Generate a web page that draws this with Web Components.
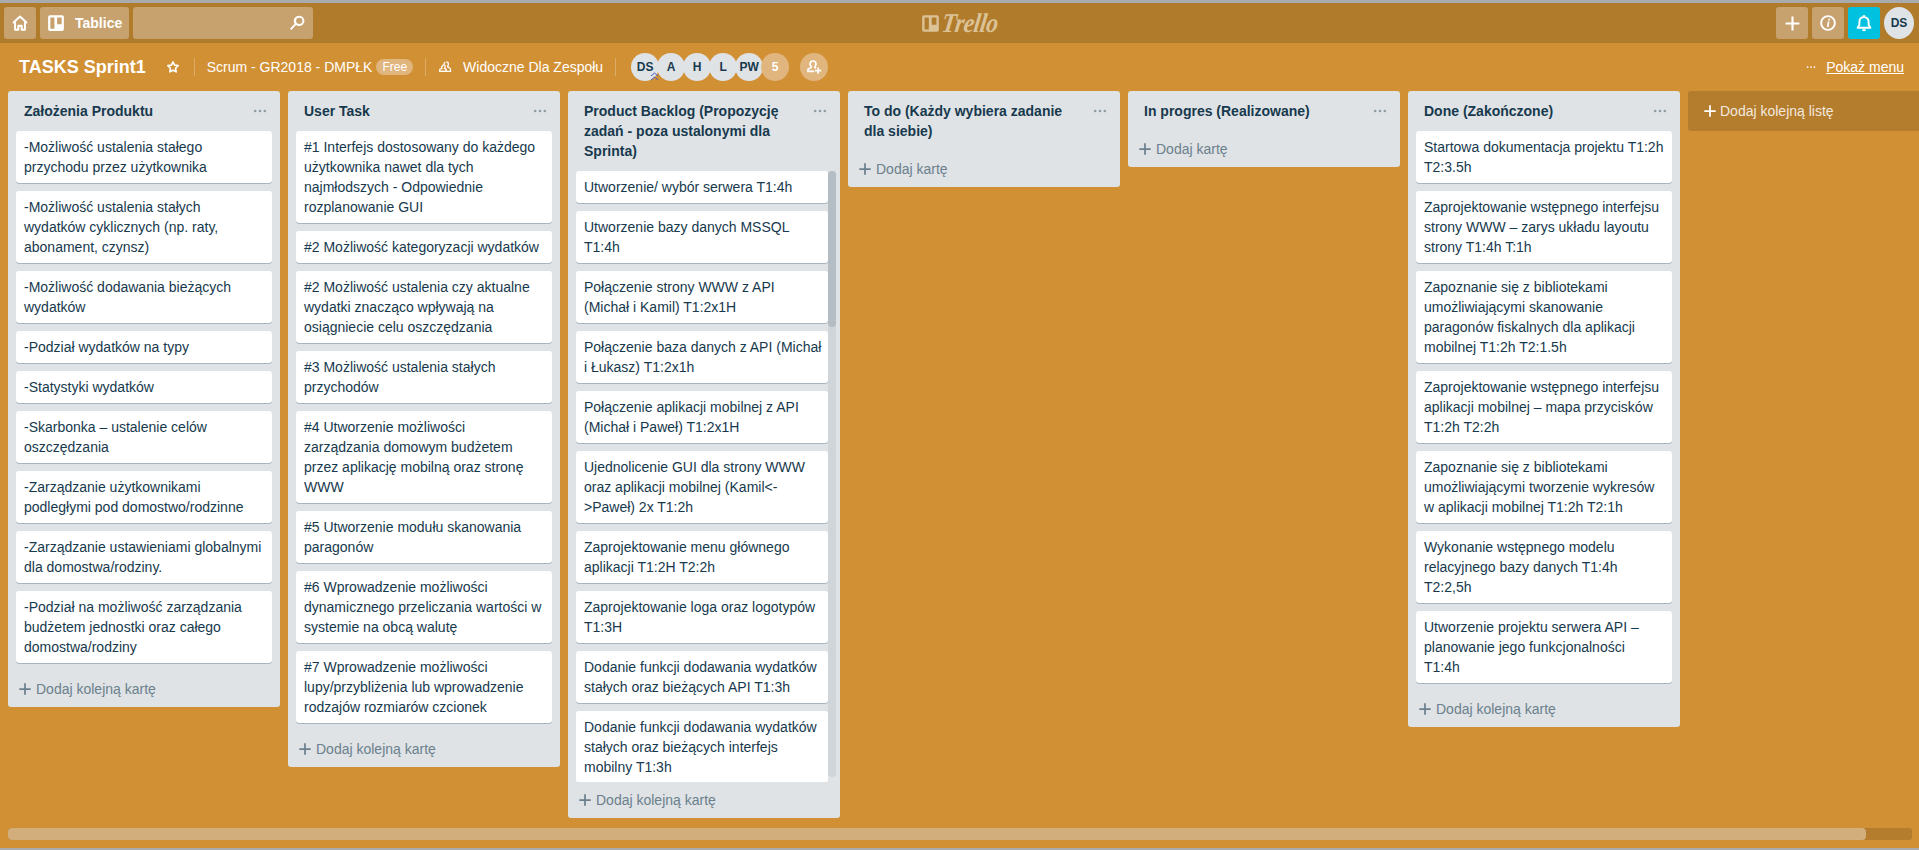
<!DOCTYPE html>
<html lang="pl">
<head>
<meta charset="utf-8">
<title>TASKS Sprint1</title>
<style>
  html, body { margin: 0; height: 100%; overflow: hidden; }
  body { font: 14px/20px "Liberation Sans", Arial, sans-serif; color: #17394d; }
</style>
</head>
<body>
<trello-page>
  <trello-appbar></trello-appbar>
  <trello-boardbar></trello-boardbar>
  <trello-board>
    <trello-list name="Założenia Produktu">
      <trello-card>-Możliwość ustalenia stałego przychodu przez użytkownika</trello-card>
      <trello-card>-Możliwość ustalenia stałych wydatków cyklicznych (np. raty, abonament, czynsz)</trello-card>
      <trello-card>-Możliwość dodawania bieżących wydatków</trello-card>
      <trello-card>-Podział wydatków na typy</trello-card>
      <trello-card>-Statystyki wydatków</trello-card>
      <trello-card>-Skarbonka – ustalenie celów oszczędzania</trello-card>
      <trello-card>-Zarządzanie użytkownikami podległymi pod domostwo/rodzinne</trello-card>
      <trello-card>-Zarządzanie ustawieniami globalnymi dla domostwa/rodziny.</trello-card>
      <trello-card>-Podział na możliwość zarządzania budżetem jednostki oraz całego domostwa/rodziny</trello-card>
    </trello-list>
    <trello-list name="User Task">
      <trello-card>#1 Interfejs dostosowany do każdego użytkownika nawet dla tych najmłodszych - Odpowiednie rozplanowanie GUI</trello-card>
      <trello-card>#2 Możliwość kategoryzacji wydatków</trello-card>
      <trello-card>#2 Możliwość ustalenia czy aktualne wydatki znacząco wpływają na osiągniecie celu oszczędzania</trello-card>
      <trello-card>#3 Możliwość ustalenia stałych przychodów</trello-card>
      <trello-card>#4 Utworzenie możliwości zarządzania domowym budżetem przez aplikację mobilną oraz stronę WWW</trello-card>
      <trello-card>#5 Utworzenie modułu skanowania paragonów</trello-card>
      <trello-card>#6 Wprowadzenie możliwości dynamicznego przeliczania wartości w systemie na obcą walutę</trello-card>
      <trello-card>#7 Wprowadzenie możliwości lupy/przybliżenia lub wprowadzenie rodzajów rozmiarów czcionek</trello-card>
    </trello-list>
    <trello-list name="Product Backlog (Propozycję zadań - poza ustalonymi dla Sprinta)" scrolling>
      <trello-card>Utworzenie/ wybór serwera T1:4h</trello-card>
      <trello-card>Utworzenie bazy danych MSSQL T1:4h</trello-card>
      <trello-card>Połączenie strony WWW z API (Michał i Kamil) T1:2x1H</trello-card>
      <trello-card>Połączenie baza danych z API (Michał i Łukasz) T1:2x1h</trello-card>
      <trello-card>Połączenie aplikacji mobilnej z API (Michał i Paweł) T1:2x1H</trello-card>
      <trello-card>Ujednolicenie GUI dla strony WWW oraz aplikacji mobilnej (Kamil&lt;-&gt;Paweł) 2x T1:2h</trello-card>
      <trello-card>Zaprojektowanie menu głównego aplikacji T1:2H T2:2h</trello-card>
      <trello-card>Zaprojektowanie loga oraz logotypów T1:3H</trello-card>
      <trello-card>Dodanie funkcji dodawania wydatków stałych oraz bieżących API T1:3h</trello-card>
      <trello-card>Dodanie funkcji dodawania wydatków stałych oraz bieżących interfejs mobilny T1:3h</trello-card>
    </trello-list>
    <trello-list name="To do (Każdy wybiera zadanie dla siebie)" composer="Dodaj kartę"></trello-list>
    <trello-list name="In progres (Realizowane)" composer="Dodaj kartę"></trello-list>
    <trello-list name="Done (Zakończone)">
      <trello-card>Startowa dokumentacja projektu T1:2h T2:3.5h</trello-card>
      <trello-card>Zaprojektowanie wstępnego interfejsu strony WWW – zarys układu layoutu strony T1:4h T:1h</trello-card>
      <trello-card>Zapoznanie się z bibliotekami umożliwiającymi skanowanie paragonów fiskalnych dla aplikacji mobilnej T1:2h T2:1.5h</trello-card>
      <trello-card>Zaprojektowanie wstępnego interfejsu aplikacji mobilnej – mapa przycisków T1:2h T2:2h</trello-card>
      <trello-card>Zapoznanie się z bibliotekami umożliwiającymi tworzenie wykresów w aplikacji mobilnej T1:2h T2:1h</trello-card>
      <trello-card>Wykonanie wstępnego modelu relacyjnego bazy danych T1:4h T2:2,5h</trello-card>
      <trello-card>Utworzenie projektu serwera API – planowanie jego funkcjonalności T1:4h</trello-card>
    </trello-list>
    <trello-addlist slot="after">Dodaj kolejną listę</trello-addlist>
  </trello-board>
</trello-page>

<script>
const ICONS = {
  home: '<path d="M1.800 8 8 2.300 14.200 8M3.600 7v7h2.900v-3.600h3V14h2.900V7" fill="none" stroke="currentColor" stroke-width="1.800" stroke-linejoin="round"/>',
  board: '<path d="M2.500 1h11A1.500 1.500 0 0 1 15 2.500v11a1.500 1.500 0 0 1-1.500 1.500h-11A1.500 1.500 0 0 1 1 13.500v-11A1.500 1.500 0 0 1 2.500 1z M3 3v10h3.600V3z M9 3v6h4V3z" fill-rule="evenodd"/>',
  search: '<path d="M10 1.500a4.600 4.600 0 1 1-2.900 8.200L3 14.200 1.700 13l4.200-4.400A4.600 4.600 0 0 1 10 1.500z M10 3.300a2.800 2.800 0 1 0 0 5.600 2.800 2.800 0 0 0 0-5.600z" fill-rule="evenodd"/>',
  star: '<path d="M8 2.200l1.800 3.700 4.100.6-3 2.900.7 4.100L8 11.600l-3.600 1.900.7-4.100-3-2.900 4.100-.6z" fill="none" stroke="currentColor" stroke-width="1.900" stroke-linejoin="round"/>',
  plus: '<path d="M7 1.500h2v5.500h5.500v2H9v5.500H7V9H1.500V7H7z"/>',
  info: '<circle cx="8" cy="8" r="6.100" fill="none" stroke="currentColor" stroke-width="1.700"/><path d="M8.400 4.300h1.500l-.3 1.400H8.100z M7.800 6.700h1.500l-.8 4.900H7z"/>',
  bell: '<path d="M8 2.800c-2.600 0-4.100 1.800-4.100 4.300v2.700l-1.600 2.400h11.400l-1.600-2.400V7.100C12.100 4.600 10.600 2.800 8 2.800z" fill="none" stroke="currentColor" stroke-width="1.700" stroke-linejoin="round"/><path d="M6.900 1.200h2.200v2H6.900z M6.200 13.500h3.600a1.800 1.800 0 0 1-3.600 0z"/>',
  team: '<path d="M9.500 2.200c1.500 0 2.400 1.100 2.400 2.600 0 .9-.3 1.600-.8 2.100v1l2.500 1.500c.5.300.7.700.7 1.200v2.300H3.300" fill="none" stroke="currentColor" stroke-width="1.500"/><path d="M7 4.800c0-1.100.5-2 1.300-2.400M6.500 5.500c1 0 1.700.9 1.700 2s-.4 1.700-.8 2.100l2 1.100v2.200H2v-2.200l2.400-1.100C4 9.200 4.600 5.500 6.500 5.500z" fill="none" stroke="currentColor" stroke-width="1.500"/>',
  member: '<path d="M7 2c1.800 0 3 1.300 3 3 0 1.100-.4 2-1.100 2.600v.9l1.100.6M5.300 8.500v-.9C4.600 7 4.100 6.100 4.100 5c0-1.700 1.200-3 2.900-3M5.300 8.400 2 10.300v2h6.200" fill="none" stroke="currentColor" stroke-width="1.700"/><path d="M11.300 8.500h1.700v2.300h2.300v1.700H13v2.300h-1.700v-2.300H9v-1.700h2.300z"/>',
  dots: '<circle cx="2.500" cy="8" r="1.400"/><circle cx="8" cy="8" r="1.400"/><circle cx="13.500" cy="8" r="1.400"/>'
};

function icon(name, size) {
  return `<svg width="${size}" height="${size}" viewBox="0 0 16 16" fill="currentColor" aria-hidden="true">${ICONS[name]}</svg>`;
}

class TrelloPage extends HTMLElement {
  constructor() {
    super();
    this.attachShadow({ mode: 'open' });
    this.shadowRoot.innerHTML = `
      <style>
        :host {
          display: flex;
          flex-direction: column;
          box-sizing: border-box;
          height: 100vh;
          background: #d29034;
          border-top: 3px solid #a9abad;
          border-bottom: 2px solid #a9abad;
        }
      </style>
      <slot></slot>
    `;
  }
}

class TrelloAppbar extends HTMLElement {
  constructor() {
    super();
    this.attachShadow({ mode: 'open' });
    this.shadowRoot.innerHTML = `
      <style>
        :host {
          display: flex;
          flex: none;
          align-items: center;
          gap: 4px;
          box-sizing: border-box;
          height: 40px;
          padding: 0 5px 0 4px;
          background: #b17b2c;
          color: #fff;
          position: relative;
        }
        .btn {
          display: flex;
          align-items: center;
          justify-content: center;
          box-sizing: border-box;
          width: 32px;
          height: 32px;
          border-radius: 3px;
          background: #c8a26e;
        }
        .boards {
          width: 89px;
          justify-content: flex-start;
          padding-left: 7px;
          gap: 10px;
          font-weight: bold;
          font-size: 14px;
        }
        .search {
          width: 180px;
          justify-content: flex-end;
          padding-right: 7px;
        }
        .spacer { flex: 1; }
        .bell { background: #00c2e0; }
        .me {
          width: 30px;
          border-radius: 50%;
          background: #dfe3e6;
          color: #17394d;
          font-weight: bold;
          font-size: 12px;
        }
        .logo {
          position: absolute;
          left: 921px;
          top: 9px;
          display: flex;
          align-items: center;
          gap: 2px;
          height: 22px;
          color: #dcc297;
        }
        .logo span {
          font: italic bold 27px/22px "Liberation Serif", serif;
          transform: skewX(-8deg) scaleX(.88);
          transform-origin: left center;
          letter-spacing: -.5px;
        }
      </style>
      <div class="btn">${icon('home', 18)}</div>
      <div class="btn boards">${icon('board', 18)}<span>Tablice</span></div>
      <div class="btn search">${icon('search', 18)}</div>
      <div class="logo">${icon('board', 19)}<span>Trello</span></div>
      <div class="spacer"></div>
      <div class="btn">${icon('plus', 17)}</div>
      <div class="btn">${icon('info', 18)}</div>
      <div class="btn bell">${icon('bell', 18)}</div>
      <div class="btn me">DS</div>
    `;
  }
}

class TrelloAvatar extends HTMLElement {
  constructor() {
    super();
    this.attachShadow({ mode: 'open' });
    this.shadowRoot.innerHTML = `
      <style>
        :host {
          display: flex;
          align-items: center;
          justify-content: center;
          flex: none;
          position: relative;
          width: 28px;
          height: 28px;
          margin-right: -2px;
          border-radius: 50%;
          background: #dfe3e6;
          color: #17394d;
          font-size: 12px;
          font-weight: bold;
        }
        :host([light]) {
          background: #e0b57e;
          color: #fff;
        }
        .admin {
          position: absolute;
          left: 19px;
          top: 19px;
          color: #4a5fc0;
        }
      </style>
      <slot></slot>
      ${this.hasAttribute('admin') ? '<svg class="admin" width="9" height="9" viewBox="0 0 9 9" fill="none" stroke="currentColor"><path d="M1 4 4.500 1 8 4M1 8 4.500 5 8 8"/></svg>' : ''}
    `;
  }
}

class TrelloBoardbar extends HTMLElement {
  constructor() {
    super();
    this.attachShadow({ mode: 'open' });
    this.shadowRoot.innerHTML = `
      <style>
        :host {
          display: flex;
          flex: none;
          align-items: center;
          box-sizing: border-box;
          height: 48px;
          padding: 0 15px 0 19px;
          color: #fff;
          white-space: nowrap;
        }
        h1 { margin: 0 20px 0 0; font-size: 18px; font-weight: bold; line-height: 24px; }
        .sep { width: 1px; height: 18px; margin: 0 12px; background: rgba(255,255,255,.25); }
        .star { display: flex; margin-right: 2px; }
        .free {
          margin-left: 4px;
          padding: 0 6px;
          height: 16px;
          border-radius: 8px;
          background: #e0b57e;
          font-size: 12px;
          line-height: 16px;
        }
        .team { display: flex; margin: 0 11px 0 0; }
        .avatars { display: flex; }
        .invite {
          display: flex;
          align-items: center;
          justify-content: center;
          width: 28px;
          height: 28px;
          margin-left: 13px;
          border-radius: 50%;
          background: #e0b57e;
        }
        .spacer { flex: 1; }
        .dots { display: flex; margin-right: 10px; }
        a { color: inherit; text-decoration: underline; }
      </style>
      <h1>TASKS Sprint1</h1>
      <span class="star">${icon('star', 14)}</span>
      <span class="sep"></span>
      <span>Scrum - GR2018 - DMPŁK</span>
      <span class="free">Free</span>
      <span class="sep"></span>
      <span class="team">${icon('team', 14)}</span>
      <span>Widoczne Dla Zespołu</span>
      <span class="sep" style="margin-right:15px"></span>
      <div class="avatars">
        <trello-avatar admin>DS</trello-avatar>
        <trello-avatar>A</trello-avatar>
        <trello-avatar>H</trello-avatar>
        <trello-avatar>L</trello-avatar>
        <trello-avatar>PW</trello-avatar>
        <trello-avatar light>5</trello-avatar>
      </div>
      <span class="invite">${icon('member', 16)}</span>
      <span class="spacer"></span>
      <span class="dots">${icon('dots', 10)}</span>
      <a href="#">Pokaż menu</a>
    `;
  }
}

class TrelloBoard extends HTMLElement {
  constructor() {
    super();
    this.attachShadow({ mode: 'open' });
    this.shadowRoot.innerHTML = `
      <style>
        :host {
          display: flex;
          flex: 1;
          flex-direction: column;
          min-height: 0;
          padding-bottom: 8px;
        }
        .canvas {
          flex: 1;
          min-height: 0;
          overflow: hidden;
        }
        .lists {
          display: flex;
          align-items: flex-start;
          gap: 8px;
          box-sizing: border-box;
          height: 100%;
          padding-left: 8px;
        }
        .bar {
          flex: none;
          height: 12px;
          margin: 10px 7px 0 8px;
          border-radius: 3px;
          background: #b47d2e;
        }
        .bar div {
          width: 1858px;
          height: 100%;
          border-radius: 4px;
          background: #d2ae7c;
        }
      </style>
      <div class="canvas">
        <div class="lists"><slot></slot><slot name="after"></slot></div>
      </div>
      <div class="bar"><div></div></div>
    `;
  }
}

class TrelloList extends HTMLElement {
  constructor() {
    super();
    this.attachShadow({ mode: 'open' });
    const composer = this.getAttribute('composer') || 'Dodaj kolejną kartę';
    const scrolling = this.hasAttribute('scrolling');
    this.shadowRoot.innerHTML = `
      <style>
        :host {
          display: flex;
          flex: 0 0 272px;
          flex-direction: column;
          box-sizing: border-box;
          max-height: 100%;
          border-radius: 3px;
          background: #dfe3e6;
        }
        :host([scrolling]) { --card-pad-right: 5px; }
        header {
          display: flex;
          flex: none;
          justify-content: space-between;
          padding: 10px 13px 10px 16px;
        }
        h2 {
          margin: 0;
          font-size: 14px;
          line-height: 20px;
          font-weight: bold;
          color: #17394d;
        }
        .menu { flex: none; margin-left: 14px; color: #8c9ba5; height: 20px; display: flex; align-items: center; }
        .wrap {
          position: relative;
          display: flex;
          flex: 0 1 auto;
          flex-direction: column;
          min-height: 0;
          margin: 0 8px;
        }
        .wrap.empty { display: none; }
        :host([scrolling]) .wrap { margin-right: 4px; padding-right: 8px; }
        .cards { min-height: 0; overflow: hidden; }
        .track {
          position: absolute;
          top: 0;
          right: 0;
          bottom: 5px;
          width: 8px;
          border-radius: 4px;
          background: #d0d5da;
        }
        .track div {
          height: 156px;
          border-radius: 4px;
          background: #b4bdc4;
        }
        footer {
          display: flex;
          flex: none;
          align-items: center;
          gap: 4px;
          height: 36px;
          padding-left: 10px;
          color: #6b808c;
        }
      </style>
      <header>
        <h2>${this.getAttribute('name')}</h2>
        <span class="menu">${icon('dots', 14)}</span>
      </header>
      <div class="wrap">
        <div class="cards"><slot></slot></div>
        ${scrolling ? '<div class="track"><div></div></div>' : ''}
      </div>
      <footer>${icon('plus', 14)}<span>${composer}</span></footer>
    `;
    if (!this.children.length) this.shadowRoot.querySelector('.wrap').classList.add('empty');
  }
}

class TrelloCard extends HTMLElement {
  constructor() {
    super();
    this.attachShadow({ mode: 'open' });
    this.shadowRoot.innerHTML = `
      <style>
        :host {
          display: block;
          box-sizing: border-box;
          margin-bottom: 8px;
          padding: 6px var(--card-pad-right, 8px) 6px 8px;
          border-radius: 3px;
          background: #fff;
          box-shadow: 0 1px 0 rgba(9,45,66,.25);
          color: #17394d;
          font-size: 14px;
          line-height: 20px;
        }
      </style>
      <slot></slot>
    `;
  }
}

class TrelloAddlist extends HTMLElement {
  constructor() {
    super();
    this.attachShadow({ mode: 'open' });
    this.shadowRoot.innerHTML = `
      <style>
        :host {
          display: flex;
          flex: 0 0 272px;
          align-items: center;
          gap: 3px;
          box-sizing: border-box;
          height: 40px;
          padding-left: 15px;
          border-radius: 3px;
          background: #b47d2e;
          color: rgba(255,255,255,.85);
        }
        svg { color: #fff; }
      </style>
      ${icon('plus', 14)}<slot></slot>
    `;
  }
}

customElements.define('trello-page', TrelloPage);
customElements.define('trello-appbar', TrelloAppbar);
customElements.define('trello-avatar', TrelloAvatar);
customElements.define('trello-boardbar', TrelloBoardbar);
customElements.define('trello-board', TrelloBoard);
customElements.define('trello-list', TrelloList);
customElements.define('trello-card', TrelloCard);
customElements.define('trello-addlist', TrelloAddlist);
</script>
</body>
</html>
